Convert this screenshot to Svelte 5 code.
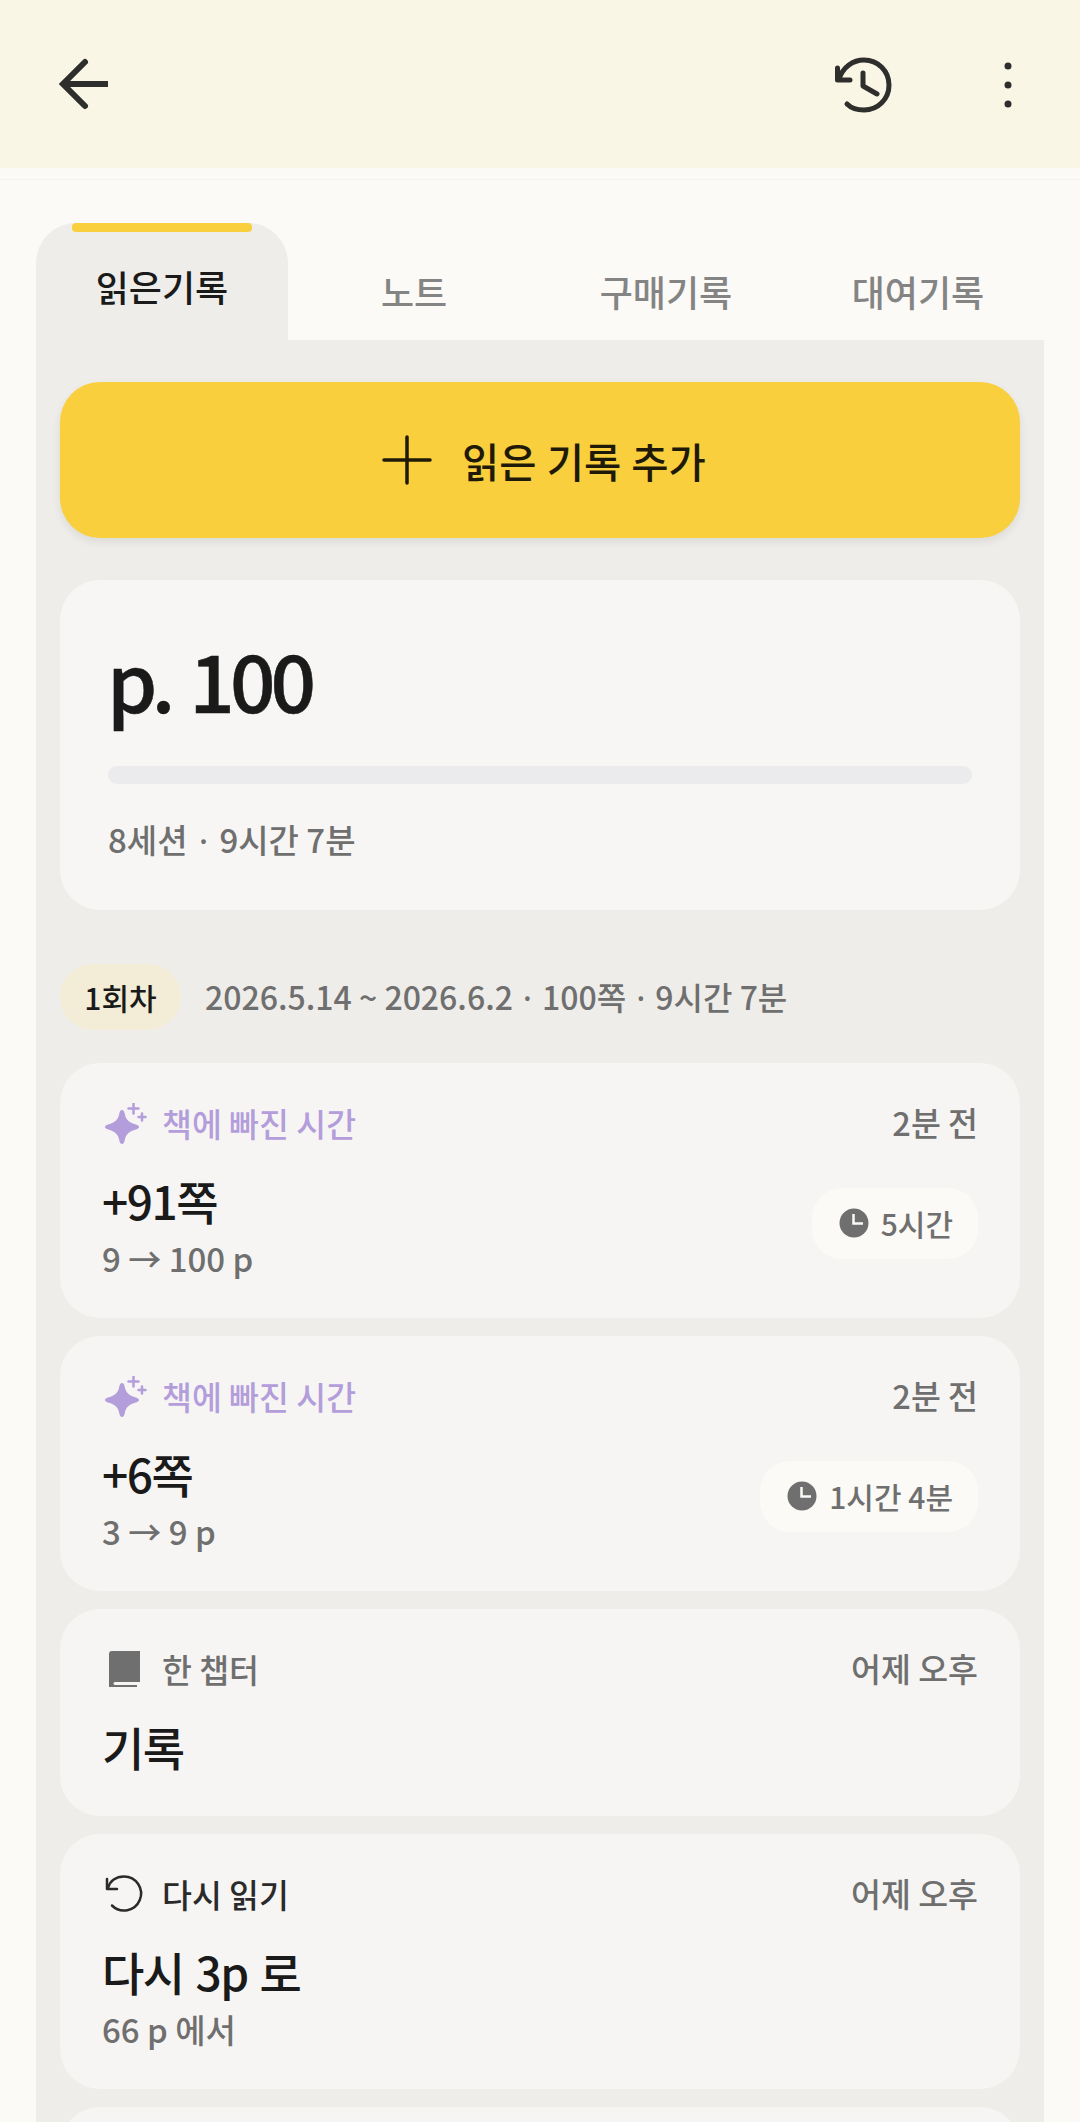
<script>
  const tabs = ["읽은기록", "노트", "구매기록", "대여기록"];
  const records = [
    { kind: "spark", label: "책에 빠진 시간", when: "2분 전", title: "+91쪽", sub: "9 → 100 p", time: "5시간" },
    { kind: "spark", label: "책에 빠진 시간", when: "2분 전", title: "+6쪽", sub: "3 → 9 p", time: "1시간 4분" },
    { kind: "book", label: "한 챕터", when: "어제 오후", title: "기록" },
    { kind: "redo", label: "다시 읽기", when: "어제 오후", title: "다시 3p 로", sub: "66 p 에서" },
  ];
</script>

<div class="page">
  <header class="topbar">
    <button class="icon-btn" aria-label="뒤로">
      <svg width="72" height="72" viewBox="0 0 72 72" fill="none" stroke="#2e2e2c" stroke-width="6">
        <path d="M60 36H15" />
        <path d="M37 14L15 36L37 58" stroke-linecap="round" />
      </svg>
    </button>
    <div class="actions">
      <svg width="66" height="66" viewBox="0 0 66 66" fill="none" stroke="#2e2e2c" stroke-width="5" stroke-linecap="round" stroke-linejoin="round">
        <path d="M8 27C12 15 22 8 33 8C47 8 58 19 58 33C58 47 47 58 33 58C26 58 20 56 16 52" />
        <path d="M6.500 16V28H19" />
        <path d="M32 21V34L46 42" />
      </svg>
      <svg width="12" height="50" viewBox="0 0 12 50" fill="#2e2e2c">
        <circle cx="6" cy="6" r="3.500" />
        <circle cx="6" cy="25" r="3.500" />
        <circle cx="6" cy="44" r="3.500" />
      </svg>
    </div>
  </header>
  <div class="divider"></div>

  <main class="content">
    <nav class="tabs">
      {#each tabs as tab, i}
        <div class="tab" class:active={i === 0}>
          {#if i === 0}<span class="marker"></span>{/if}
          <span>{tab}</span>
        </div>
      {/each}
    </nav>

    <section class="panel">
      <button class="add">
        <svg width="52" height="52" viewBox="0 0 52 52" stroke="#1f1a08" stroke-width="3.500" stroke-linecap="round">
          <path d="M26 3V49M3 26H49" />
        </svg>
        <span>읽은 기록 추가</span>
      </button>

      <div class="summary">
        <div class="page-no">p. 100</div>
        <div class="track"></div>
        <div class="stats">8세션 <span class="dot wide">·</span> 9시간 7분</div>
      </div>

      <div class="round">
        <span class="chip">1회차</span>
        <span class="range">2026.5.14 ~ 2026.6.2 <span class="dot">·</span> 100쪽 <span class="dot">·</span> 9시간 7분</span>
      </div>

      <div class="list">
        {#each records as r}
          <article class="card">
            <div class="card-top">
              <div class="label" class:purple={r.kind === "spark"} class:dark={r.kind === "redo"}>
                {#if r.kind === "spark"}
                  <svg width="44" height="44" viewBox="0 0 44 44" fill="#b39ddb">
                    <path d="M19 7C20.500 7 21.200 8.500 21.800 11C23 16.500 25.500 19.500 33 21.500C35 22.200 36 23 36 24C36 25 35 25.800 33 26.500C25.500 28.500 23 31.500 21.800 37C21.200 39.500 20.500 41 19 41C17.500 41 16.800 39.500 16.200 37C15 31.500 12.500 28.500 5 26.500C3 25.800 2 25 2 24C2 23 3 22.200 5 21.500C12.500 19.500 15 16.500 16.200 11C16.800 8.500 17.500 7 19 7Z" />
                    <path d="M30.500 0.500V10.500M25.500 5.500H35.500M39 10.500V17.500M35.500 14H42.500" stroke="#b39ddb" stroke-width="2.500" stroke-linecap="round" fill="none" />
                  </svg>
                {:else if r.kind === "book"}
                  <svg width="44" height="44" viewBox="0 0 44 44" fill="#6f6f6f">
                    <path d="M9 2H37V33H12C10 33 10 36 12 36H34V38H6V5C6 3 7 2 9 2Z" />
                  </svg>
                {:else}
                  <svg width="44" height="44" viewBox="0 0 44 44" fill="none" stroke="#2a2a2a" stroke-width="2.500" stroke-linecap="round" stroke-linejoin="round">
                    <path d="M5 14C7 7 13 2.500 21 2.500A17 17 0 1 1 9 31.500" />
                    <path d="M4 5V15H14" />
                  </svg>
                {/if}
                <span>{r.label}</span>
              </div>
              <span class="when">{r.when}</span>
            </div>
            <div class="card-body">
              <div class="text">
                <div class="title">{r.title}</div>
                {#if r.sub}<div class="sub">{r.sub}</div>{/if}
              </div>
              {#if r.time}
                <div class="pill">
                  <svg width="30" height="30" viewBox="0 0 30 30">
                    <circle cx="15" cy="15" r="14.500" fill="#6f6f6f" />
                    <path d="M14.500 6V15.500H24" fill="none" stroke="#fbfaf6" stroke-width="2.500" />
                  </svg>
                  <span>{r.time}</span>
                </div>
              {/if}
            </div>
          </article>
        {/each}
        <article class="card last"></article>
      </div>
    </section>
  </main>
</div>

<style>
  :global(body) {
    margin: 0;
    background: #fbfaf6;
  }

  .page {
    height: 2122px;
    overflow: hidden;
    background: #fbfaf6;
    font-family: "Noto Sans CJK KR", "Noto Sans", sans-serif;
    color: #1a1a1a;
  }

  .topbar {
    height: 168px;
    background: #f9f6e5;
    display: flex;
    align-items: center;
    justify-content: space-between;
    padding: 0 66px 0 48px;
  }

  .icon-btn {
    border: none;
    background: none;
    padding: 0;
    display: flex;
  }

  .actions {
    display: flex;
    align-items: center;
    gap: 105px;
    padding-top: 2px;
  }

  .divider {
    height: 1px;
    margin-top: 11px;
    background: #f4f3ef;
  }

  .content {
    padding: 43px 36px 0;
  }

  .tabs {
    display: grid;
    grid-template-columns: repeat(4, 252px);
    height: 117px;
  }

  .tab {
    position: relative;
    display: flex;
    align-items: center;
    justify-content: center;
    padding-top: 18px;
    box-sizing: border-box;
    font-size: 36px;
    font-weight: 500;
    color: #848484;
  }

  .tab.active {
    background: #eeede9;
    border-radius: 40px 40px 0 0;
    color: #1a1a1a;
    padding-top: 8px;
  }

  .marker {
    position: absolute;
    top: 0;
    left: 36px;
    width: 180px;
    height: 9px;
    background: #f9cf3e;
    border-radius: 4px;
  }

  .panel {
    background: #eeede9;
    padding: 42px 24px 0;
  }

  .add {
    width: 100%;
    height: 156px;
    border: none;
    border-radius: 40px;
    background: #f9cf3e;
    box-shadow: 0 4px 10px rgba(0, 0, 0, 0.08);
    display: flex;
    align-items: center;
    justify-content: center;
    gap: 29px;
    padding: 0 0 0 7px;
    font: inherit;
    font-size: 40.500px;
    font-weight: 500;
    word-spacing: 1px;
    color: #1f1a08;
  }

  .summary {
    margin-top: 42px;
    height: 330px;
    box-sizing: border-box;
    background: #f7f6f4;
    border-radius: 40px;
    padding: 46px 48px 0;
  }

  .page-no {
    font-size: 80px;
    font-weight: 500;
    letter-spacing: -5px;
    word-spacing: 6px;
    line-height: 104px;
    margin-left: -1px;
    -webkit-text-stroke: 0.5px #1a1a1a;
  }

  .track {
    margin-top: 36px;
    height: 18px;
    border-radius: 9px;
    background: #ebebed;
  }

  .stats {
    margin-top: 32px;
    font-size: 33px;
    font-weight: 500;
    line-height: 46px;
    color: #6f6f6f;
  }

  .dot {
    font-family: "Noto Sans", sans-serif;
    margin: 0 3px;
  }

  .dot.wide {
    margin: 0 4px;
  }

  .round {
    margin-top: 54px;
    display: flex;
    align-items: center;
    gap: 24px;
  }

  .chip {
    width: 121px;
    height: 66px;
    display: flex;
    align-items: center;
    justify-content: center;
    border-radius: 33px;
    background: #f3ecd6;
    font-size: 30px;
    font-weight: 500;
  }

  .range {
    padding-bottom: 2px;
    font-size: 32px;
    font-weight: 500;
    color: #6f6f6f;
  }

  .list {
    margin-top: 33px;
    display: flex;
    flex-direction: column;
    gap: 18px;
  }

  .card {
    background: #f6f5f3;
    border-radius: 40px;
    padding: 36px 42px 37px;
  }

  .card.last {
    height: 200px;
  }

  .card-top {
    display: flex;
    justify-content: space-between;
    align-items: flex-start;
    font-size: 32.500px;
    font-weight: 500;
    line-height: 46px;
    color: #6f6f6f;
  }

  .label {
    display: flex;
    align-items: center;
    gap: 15px;
    margin-top: 1px;
    height: 46px;
    margin-left: 1px;
  }

  .label svg {
    margin-top: 4px;
  }

  .label.purple {
    color: #b39ddb;
  }

  .label.dark {
    color: #2a2a2a;
  }

  .card-body {
    display: flex;
    justify-content: space-between;
    align-items: center;
    margin-top: 21px;
  }

  .title {
    font-size: 46px;
    font-weight: 500;
    line-height: 66px;
    letter-spacing: -1.500px;
    word-spacing: 3px;
  }

  .sub {
    margin-top: 2px;
    font-size: 33px;
    font-weight: 500;
    line-height: 46px;
    color: #6f6f6f;
  }

  .pill {
    height: 71px;
    margin-bottom: 2px;
    padding: 0 25px 0 27px;
    display: flex;
    align-items: center;
    gap: 12px;
    border-radius: 30px;
    background: #fbfaf6;
    font-size: 30px;
    font-weight: 500;
    color: #6f6f6f;
  }
</style>
